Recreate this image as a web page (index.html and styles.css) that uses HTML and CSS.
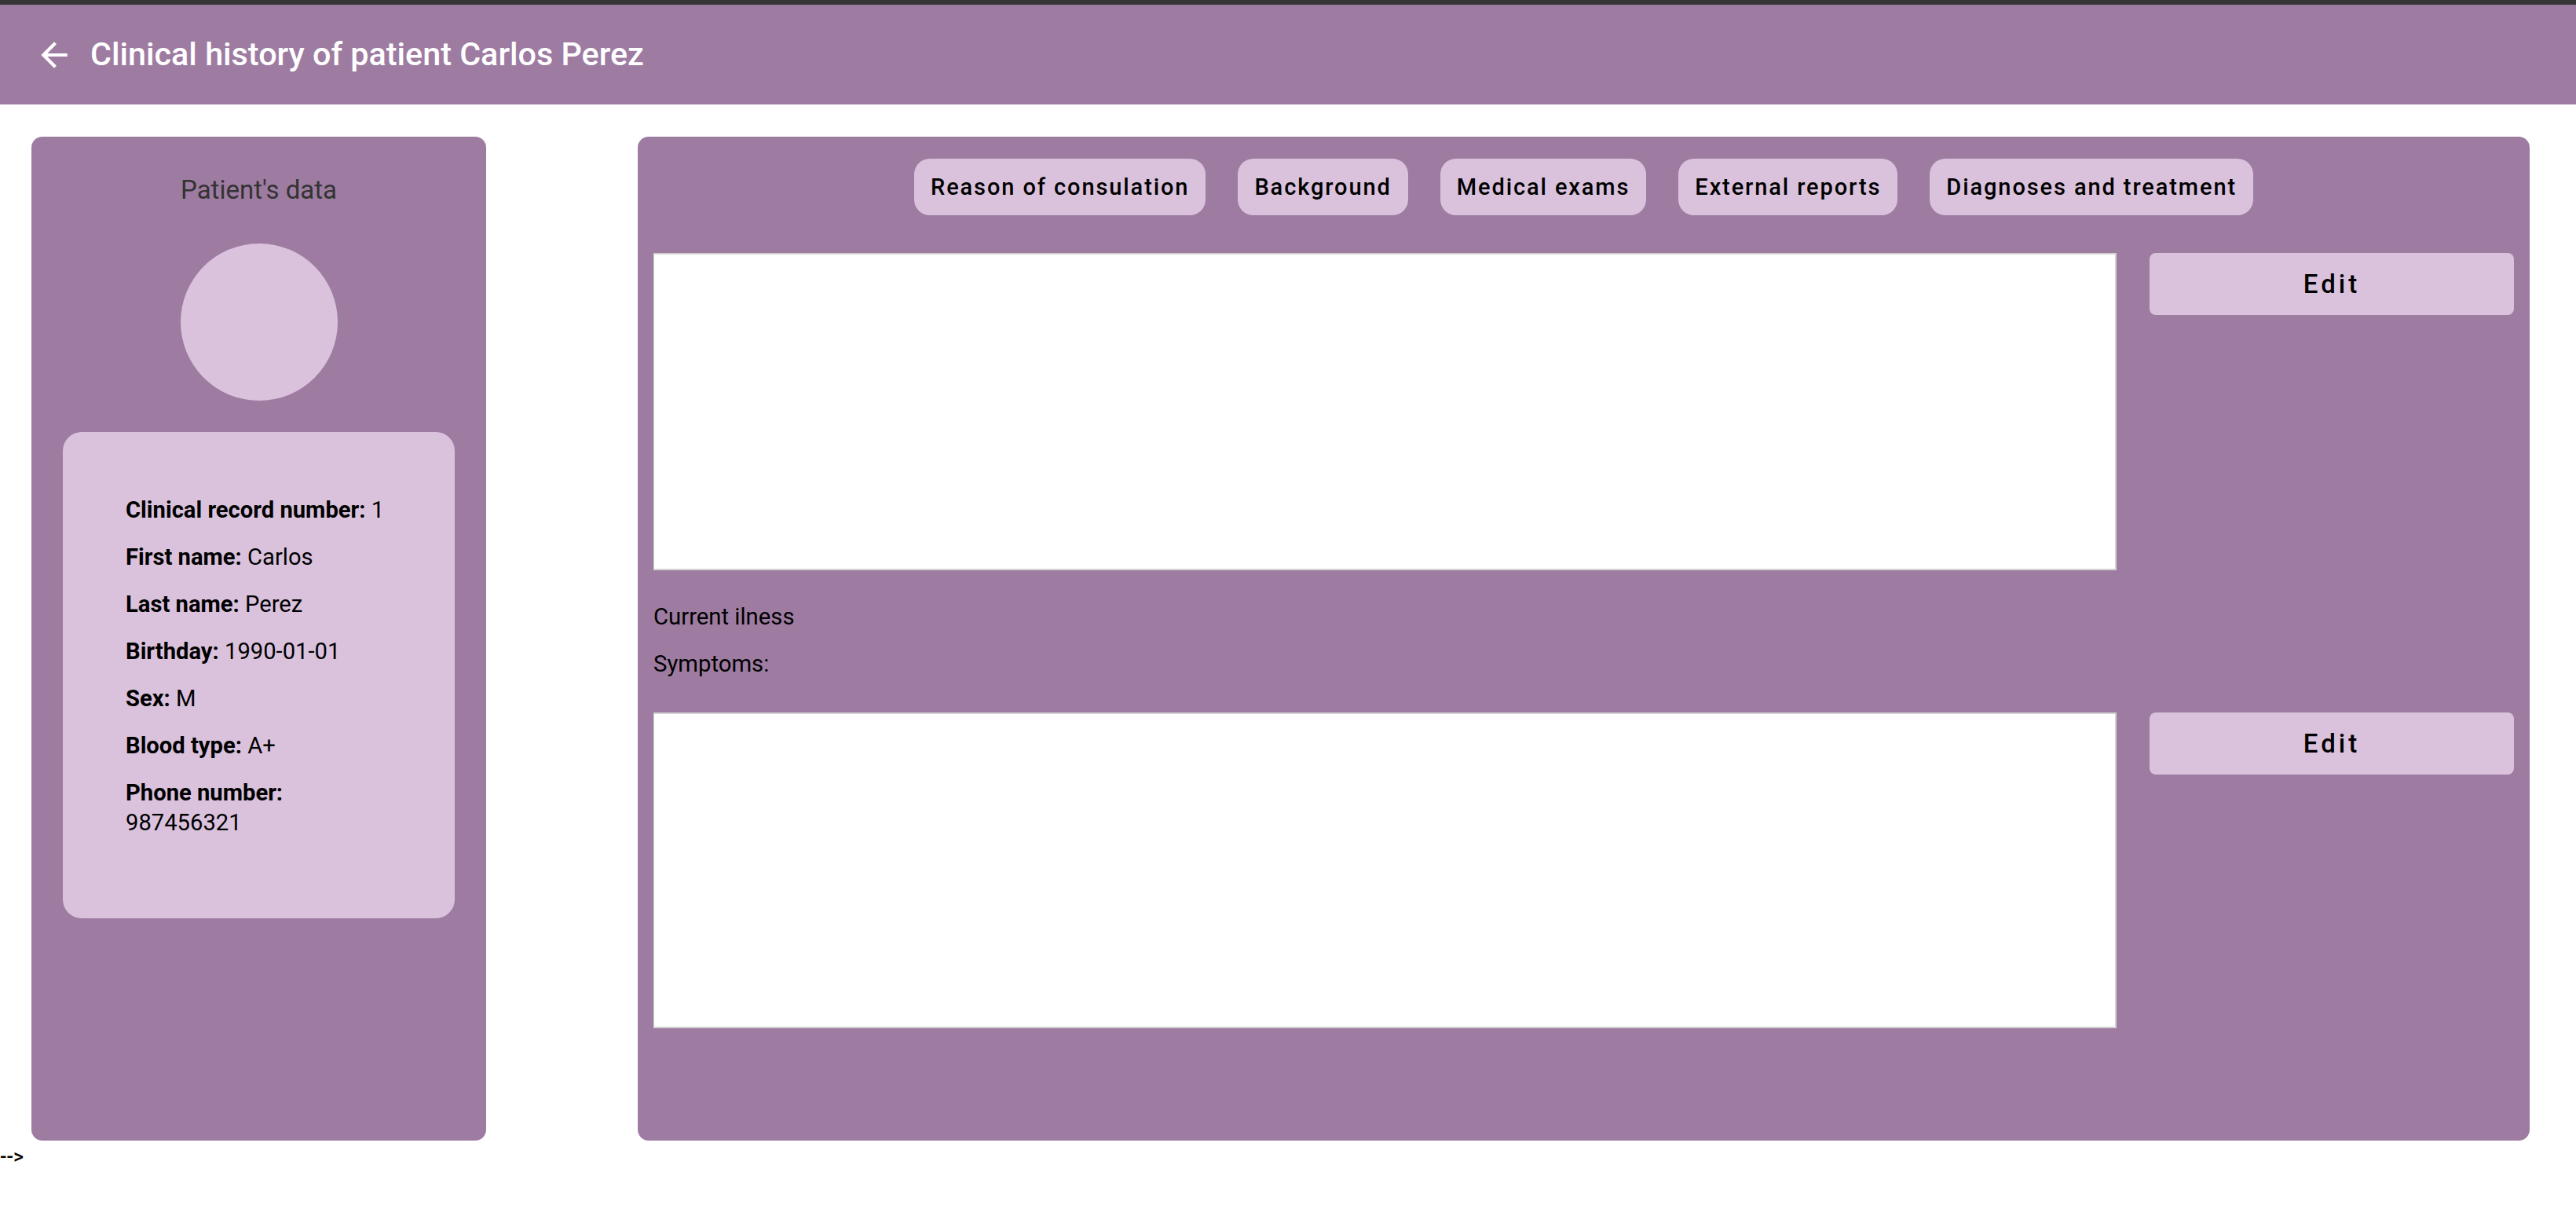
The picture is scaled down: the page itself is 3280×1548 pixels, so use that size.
FILE: index.html
```html
<!DOCTYPE html>
<html lang="en">
<head>
<meta charset="utf-8">
<title>Clinical history</title>
<link rel="stylesheet" href="styles.css">
</head>
<body>
<div class="topstrip"></div>
<header class="appbar">
  <svg class="back" viewBox="0 0 24 24" width="50" height="50"><path d="M20 11H7.83l5.59-5.59L12 4l-8 8 8 8 1.41-1.41L7.83 13H20v-2z" fill="#fff"/></svg>
  <h1 class="title">Clinical history of patient Carlos Perez</h1>
</header>
<main class="layout">
  <aside class="patient">
    <div class="patient-title">Patient's data</div>
    <div class="avatar"></div>
    <div class="info-card">
      <p class="info"><b>Clinical record number:</b> 1</p>
      <p class="info"><b>First name:</b> Carlos</p>
      <p class="info"><b>Last name:</b> Perez</p>
      <p class="info"><b>Birthday:</b> 1990-01-01</p>
      <p class="info"><b>Sex:</b> M</p>
      <p class="info"><b>Blood type:</b> A+</p>
      <p class="info"><b>Phone number:</b> 987456321</p>
    </div>
  </aside>
  <section class="history">
    <nav class="tabs">
      <button class="tab">Reason of consulation</button>
      <button class="tab">Background</button>
      <button class="tab">Medical exams</button>
      <button class="tab">External reports</button>
      <button class="tab">Diagnoses and treatment</button>
    </nav>
    <div class="field-row first">
      <div class="textbox"></div>
      <button class="edit">Edit</button>
    </div>
    <div class="labels">
      <div class="label">Current ilness</div>
      <div class="label">Symptoms:</div>
    </div>
    <div class="field-row second">
      <div class="textbox"></div>
      <button class="edit">Edit</button>
    </div>
  </section>
</main>
<div class="stray">--&gt;</div>
</body>
</html>
```
FILE: styles.css
```css
html, body {
  margin: 0;
  padding: 0;
  background: #ffffff;
  font-family: Roboto, "Noto Sans", sans-serif;
  color: #000;
}

.topstrip {
  height: 6px;
  background: #353535;
}

.appbar {
  height: 127px;
  background: #9e7ca2;
  display: flex;
  align-items: center;
  padding-left: 44px;
  box-sizing: border-box;
}

.back {
  display: block;
  flex: none;
}

.title {
  margin: 0 0 0 21px;
  font-size: 41.3px;
  font-weight: 500;
  color: #ffffff;
  line-height: 1;
}

.layout {
  display: flex;
  gap: 193px;
  padding: 41px 59px 0 40px;
  height: 1319px;
  box-sizing: border-box;
}

.patient {
  width: 579px;
  flex: none;
  background: #9e7ca2;
  border-radius: 14px;
  padding: 48px 40px 0;
  box-sizing: border-box;
  display: flex;
  flex-direction: column;
  align-items: center;
}

.patient-title {
  font-size: 33px;
  line-height: 39px;
  color: #333333;
}

.avatar {
  width: 200px;
  height: 200px;
  border-radius: 50%;
  background: #dac2dd;
  margin-top: 49px;
}

.info-card {
  margin-top: 40px;
  align-self: stretch;
  height: 619px;
  background: #dac2dd;
  border-radius: 24px;
  padding: 58px 79px 0 80px;
  box-sizing: border-box;
}

.info {
  margin: 22px 0 0;
  font-size: 29.2px;
  line-height: 38px;
}

.info b {
  font-weight: 700;
}

.history {
  flex: 1;
  background: #9e7ca2;
  border-radius: 14px;
  padding: 28px 20px 0;
  box-sizing: border-box;
  display: flex;
  flex-direction: column;
}

.tabs {
  display: flex;
  justify-content: center;
  gap: 41px;
}

.tab {
  height: 72px;
  border: none;
  border-radius: 20px;
  background: #dac2dd;
  padding: 0 21px;
  font-family: Roboto, sans-serif;
  font-size: 29px;
  font-weight: 500;
  letter-spacing: 1.9px;
  color: #000;
}

.field-row {
  display: flex;
  gap: 42px;
  align-items: flex-start;
}

.field-row.first {
  margin-top: 48px;
}

.field-row.first .textbox {
  height: 404px;
}

.field-row.second {
  margin-top: 45px;
}

.field-row.second .textbox {
  height: 402px;
}

.textbox {
  flex: 1;
  background: #ffffff;
  border: 2px solid #d2d2d2;
  border-left-width: 1px;
  box-sizing: border-box;
}

.edit {
  width: 464px;
  height: 79px;
  flex: none;
  border: none;
  border-radius: 8px;
  background: #dac2dd;
  font-family: Roboto, sans-serif;
  font-size: 33px;
  font-weight: 500;
  letter-spacing: 4px;
  color: #000;
}

.labels {
  margin-top: 42px;
  display: flex;
  flex-direction: column;
  gap: 26px;
}

.label {
  font-size: 29.3px;
  line-height: 34px;
}

.stray {
  margin-top: 6px;
  font-size: 25px;
  font-weight: 500;
  line-height: 30px;
  font-family: Roboto, sans-serif;
}
```
